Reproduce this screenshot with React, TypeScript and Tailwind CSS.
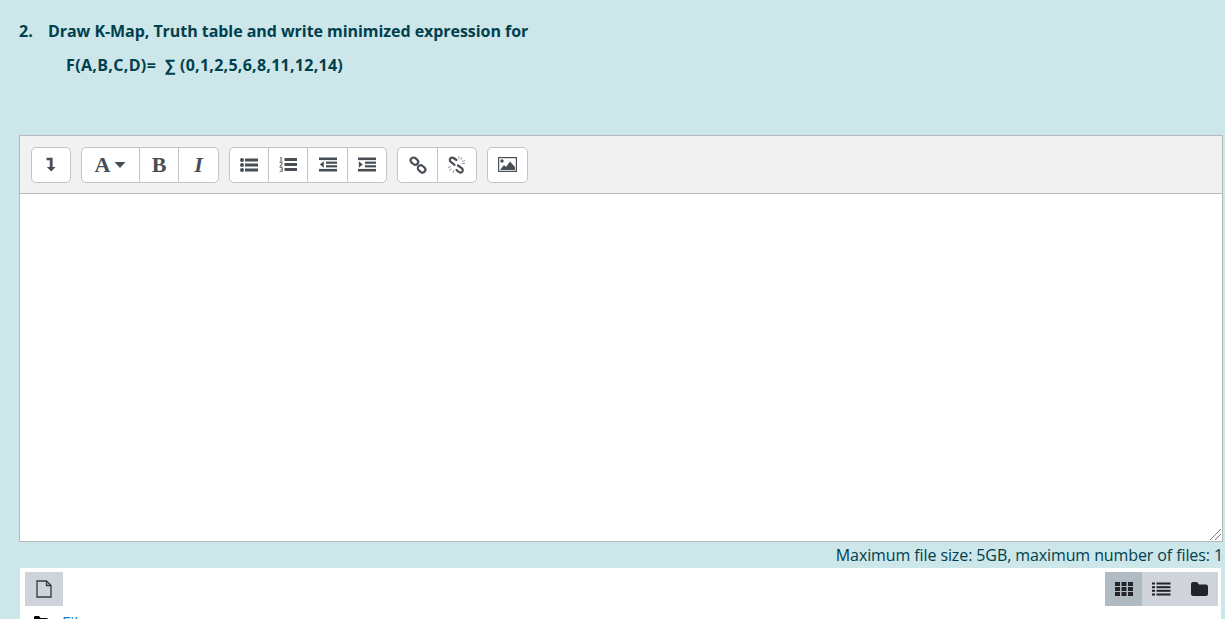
const Btn = ({ w, last, children }: { w: string; last?: boolean; children: React.ReactNode }) => (
  <div className={`${w} h-full flex items-center justify-center ${last ? '' : 'border-r border-[#c4c4c4]'}`}>{children}</div>
);

const Group = ({ children }: { children: React.ReactNode }) => (
  <div className="h-[36px] flex bg-white border border-[#c4c4c4] rounded-[5px]">{children}</div>
);

const ic = '#484e55';

export default function App() {
  return (
    <div className="h-[619px] overflow-hidden bg-[#cce6ea] pl-[19px] pr-[2px] text-[#00404d] font-['Open_Sans',sans-serif]">
      <div className="flex pt-[19px] h-[135px] flex-col font-bold text-[16px]">
        <div className="flex h-[24px] items-center">
          <span className="w-[29px]">2.</span>
          <span className="tracking-[-0.05px]">Draw K-Map, Truth table and write minimized expression for</span>
        </div>
        <div className="flex h-[24px] items-center mt-[10px] pl-[47px]">
          <span className="w-[99px] tracking-[0.35px]">F(A,B,C,D)=</span>
          <span className="w-[15px]">∑</span>
          <span className="tracking-[0.27px]">(0,1,2,5,6,8,11,12,14)</span>
        </div>
      </div>

      <div className="border border-[#b8b8b8] bg-white h-[407px] flex flex-col">
        <div className="h-[58px] shrink-0 bg-[#f1f1f1] border-b border-[#b8b8b8] flex items-center gap-[10px] pl-[11px]">
          <Group>
            <Btn w="w-[38px]" last>
              <svg width="10" height="15" viewBox="0 0 10 15"><path d="M0.5 0.8H6.6V10H9.6L5.2 14.6L0.8 10H3.8V3.2H0.5Z" fill={ic} /></svg>
            </Btn>
          </Group>
          <Group>
            <Btn w="w-[58px]">
              <span className="font-['Liberation_Serif',serif] font-bold text-[22px] text-[#484e55] leading-none">A</span>
              <svg className="ml-[4px]" width="12" height="6" viewBox="0 0 12 6"><path d="M0.5 0H11.5L6 6Z" fill={ic} /></svg>
            </Btn>
            <Btn w="w-[39px]">
              <span className="font-['Liberation_Serif',serif] font-bold text-[22px] text-[#484e55] leading-none">B</span>
            </Btn>
            <Btn w="w-[39px]" last>
              <span className="font-['Liberation_Serif',serif] italic font-bold text-[22px] text-[#484e55] leading-none">I</span>
            </Btn>
          </Group>
          <Group>
            <Btn w="w-[39px]">
              <svg width="18" height="14" viewBox="0 0 18 14" fill={ic}>
                <circle cx="2" cy="2" r="2" /><circle cx="2" cy="7" r="2" /><circle cx="2" cy="12" r="2" />
                <rect x="5" y="0.5" width="13" height="3" /><rect x="5" y="5.5" width="13" height="3" /><rect x="5" y="10.5" width="13" height="3" />
              </svg>
            </Btn>
            <Btn w="w-[39px]">
              <svg width="18" height="15" viewBox="0 0 18 15" fill={ic}>
                <path d="M1 0.4L2.6 0V3.9H3.6V4.6H0.6V3.9H1.6V1L1 1.1Z" />
                <path d="M0.6 5.2H3.5V7.2L1.8 8.9H3.6V9.6H0.6V8.9L2.5 7V5.9H0.6Z" />
                <path d="M0.6 10.2H3.6V14.8H0.6V14.1H2.6V12.8H1.2V12.2H2.6V10.9H0.6Z" />
                <rect x="5.5" y="1" width="12.5" height="3" /><rect x="5.5" y="6" width="12.5" height="3" /><rect x="5.5" y="11" width="12.5" height="3" />
              </svg>
            </Btn>
            <Btn w="w-[40px]">
              <svg width="18" height="15" viewBox="0 0 18 15" fill={ic}>
                <rect x="0" y="0.5" width="18" height="2.6" /><rect x="7" y="4.6" width="11" height="2.2" /><rect x="7" y="8.2" width="11" height="2.2" /><rect x="0" y="11.9" width="18" height="2.6" />
                <path d="M4.8 4.2V10.8L0.8 7.5Z" />
              </svg>
            </Btn>
            <Btn w="w-[38px]" last>
              <svg width="18" height="15" viewBox="0 0 18 15" fill={ic}>
                <rect x="0" y="0.5" width="18" height="2.6" /><rect x="7" y="4.6" width="11" height="2.2" /><rect x="7" y="8.2" width="11" height="2.2" /><rect x="0" y="11.9" width="18" height="2.6" />
                <path d="M0.8 4.2V10.8L4.8 7.5Z" />
              </svg>
            </Btn>
          </Group>
          <Group>
            <Btn w="w-[40px]">
              <svg width="18" height="18" viewBox="0 0 18 18" fill="none" stroke={ic} strokeWidth="2.2">
                <rect x="1.4" y="2.2" width="8" height="5.8" rx="2.9" transform="rotate(40 5.4 5.1)" />
                <rect x="8.6" y="10" width="8" height="5.8" rx="2.9" transform="rotate(40 12.6 12.9)" />
              </svg>
            </Btn>
            <Btn w="w-[38px]" last>
              <svg width="20" height="20" viewBox="0 0 20 20" fill="none">
                <path d="M9.5 5L6.5 3C5 2 3 3 2.8 4.6C2.7 5.6 3.2 6.4 4 7L7.5 9.8" stroke={ic} strokeWidth="2.2" strokeLinecap="round" />
                <path d="M11 10.5L15 13.4C16.6 14.8 15.6 17.6 13.4 17.6C12.6 17.6 12 17.2 11.4 16.7L9.5 15" stroke={ic} strokeWidth="2.2" strokeLinecap="round" />
                <path d="M12 1V4M15 2.5L13.8 4.8M18 5.5L15 6.5M18 8.5H15M1 12.5L4 11.5M2 15.5L4.5 13.5M6 18L6.8 15" stroke="#9a9a9a" strokeWidth="1" />
              </svg>
            </Btn>
          </Group>
          <Group>
            <Btn w="w-[39px]" last>
              <svg width="19" height="15" viewBox="0 0 19 15">
                <rect x="0.6" y="0.6" width="17.8" height="13.8" fill="none" stroke={ic} strokeWidth="1.2" />
                <circle cx="4" cy="4" r="1.7" fill={ic} />
                <path d="M2 13L6 8L8 10L12 4.5L17 10V13Z" fill={ic} />
              </svg>
            </Btn>
          </Group>
        </div>
        <div className="relative flex-1">
          <svg className="absolute right-0 bottom-0" width="14" height="14" viewBox="0 0 14 14" stroke="#7a7a7a" strokeWidth="1">
            <path d="M2 13L13 2M7 13L13 7" />
          </svg>
        </div>
      </div>

      <div className="h-[26px] flex items-center justify-end text-[16px] text-[#00404d] leading-none tracking-[-0.1px]">
        Maximum file size: 5GB, maximum number of files: 1
      </div>

      <div className="bg-white h-[60px] ml-[1px] mr-[2px] pl-[5px] pr-[3px] pt-[4px]">
        <div className="flex justify-between">
          <div className="w-[38px] h-[34px] bg-[#ced4da] flex items-center justify-center">
            <svg width="16" height="18" viewBox="0 0 16 18" fill="none" stroke="#343a40" strokeWidth="1.3">
              <path d="M1 1H10.5L15 5.5V17H1Z" /><path d="M10.5 1V5.5H15" />
            </svg>
          </div>
          <div className="flex h-[34px] w-[113px] bg-[#ced4da]">
            <div className="w-[37px] bg-[#b0bac3] flex items-center justify-center">
              <svg width="18" height="14" viewBox="0 0 18 14" fill="#212529">
                <rect x="0" y="0" width="5" height="4" /><rect x="6.5" y="0" width="5" height="4" /><rect x="13" y="0" width="5" height="4" />
                <rect x="0" y="5" width="5" height="4" /><rect x="6.5" y="5" width="5" height="4" /><rect x="13" y="5" width="5" height="4" />
                <rect x="0" y="10" width="5" height="4" /><rect x="6.5" y="10" width="5" height="4" /><rect x="13" y="10" width="5" height="4" />
              </svg>
            </div>
            <div className="w-[38px] flex items-center justify-center">
              <svg width="19" height="14" viewBox="0 0 19 14" fill="#212529">
                <rect x="0" y="0.5" width="3" height="2" /><rect x="0" y="4.2" width="3" height="2" /><rect x="0" y="7.8" width="3" height="2" /><rect x="0" y="11.5" width="3" height="2" />
                <rect x="4.5" y="0.5" width="14" height="2" /><rect x="4.5" y="4.2" width="14" height="2" /><rect x="4.5" y="7.8" width="14" height="2" /><rect x="4.5" y="11.5" width="14" height="2" />
              </svg>
            </div>
            <div className="flex-1 flex items-center justify-center">
              <svg width="17" height="14" viewBox="0 0 17 14"><path d="M0 2C0 1 .7 0 2 0H6L8 2.5H15C16 2.5 17 3.2 17 4.5V12C17 13 16 14 15 14H2C1 14 0 13 0 12Z" fill="#212529" /></svg>
            </div>
          </div>
        </div>
        <div className="flex items-center mt-[5px] pl-[9px] h-[20px]">
          <svg width="14" height="11" viewBox="0 0 14 11"><path d="M0 1.5C0 .7.5 0 1.5 0H5L6.5 2H12.5C13.3 2 14 2.6 14 3.5V9.5C14 10.3 13.3 11 12.5 11H1.5C.7 11 0 10.3 0 9.5Z" fill="#000" /></svg>
          <span className="ml-[14px] mt-[4px] text-[16px] text-[#1177d1]">Files</span>
        </div>
      </div>
    </div>
  );
}
